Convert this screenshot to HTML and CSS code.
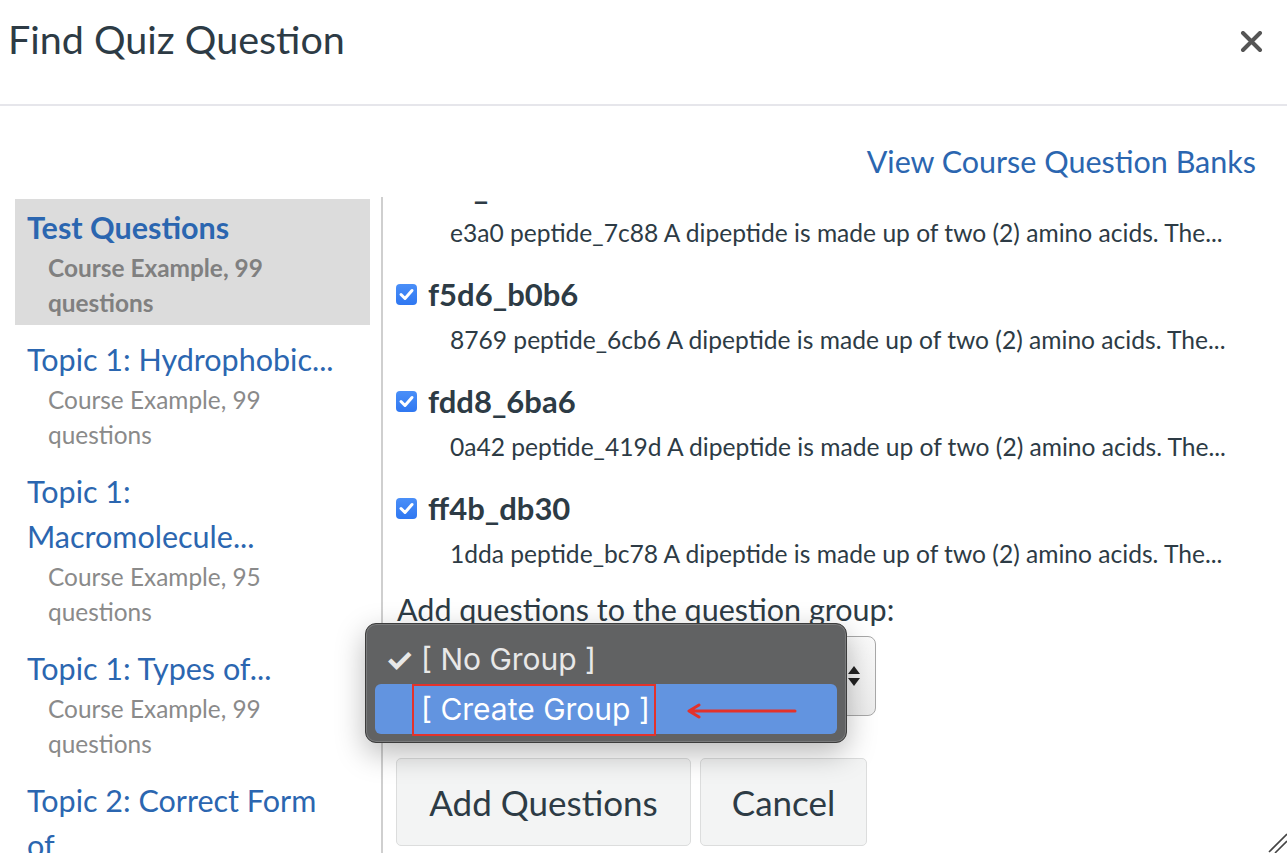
FILE: index.html
```html
<!DOCTYPE html>
<html lang="en">
<head>
<meta charset="utf-8">
<title>Find Quiz Question</title>
<link rel="stylesheet" href="styles.css">
</head>
<body>
<div class="dialog">
  <header class="header">
    <h1 class="title">Find Quiz Question</h1>
    <button class="close" aria-label="Close">
      <svg width="23" height="22" viewBox="0 0 23 22"><path d="M3 2 L20 19 M20 2 L3 19" stroke="#555" stroke-width="4" stroke-linecap="round"/></svg>
    </button>
  </header>
  <div class="body">
    <div class="bank-link-row"><a class="bank-link" href="#">View Course Question Banks</a></div>
    <div class="columns">
      <nav class="sidebar">
        <div class="bank selected">
          <div class="bank-title">Test Questions</div>
          <div class="bank-sub">Course Example, 99 questions</div>
        </div>
        <div class="bank">
          <div class="bank-title">Topic 1: Hydrophobic...</div>
          <div class="bank-sub">Course Example, 99 questions</div>
        </div>
        <div class="bank">
          <div class="bank-title">Topic 1:<br>Macromolecule...</div>
          <div class="bank-sub">Course Example, 95 questions</div>
        </div>
        <div class="bank">
          <div class="bank-title">Topic 1: Types of...</div>
          <div class="bank-sub">Course Example, 99 questions</div>
        </div>
        <div class="bank">
          <div class="bank-title">Topic 2: Correct Form<br>of...</div>
          <div class="bank-sub">Course Example, 99 questions</div>
        </div>
      </nav>
      <section class="pane">
        <div class="q-list">
          <div class="q-list-inner">
            <div class="q">
              <div class="q-title"><span class="cb"><svg width="21" height="21" viewBox="0 0 21 21"><path d="M5 10.5 L9 14.5 L16 6.5" fill="none" stroke="#fff" stroke-width="3" stroke-linecap="round" stroke-linejoin="round"/></svg></span>e3f_2c91</div>
              <div class="q-desc">e3a0 peptide_7c88 A dipeptide is made up of two (2) amino acids. The...</div>
            </div>
            <div class="q">
              <div class="q-title"><span class="cb"><svg width="21" height="21" viewBox="0 0 21 21"><path d="M5 10.5 L9 14.5 L16 6.5" fill="none" stroke="#fff" stroke-width="3" stroke-linecap="round" stroke-linejoin="round"/></svg></span>f5d6_b0b6</div>
              <div class="q-desc">8769 peptide_6cb6 A dipeptide is made up of two (2) amino acids. The...</div>
            </div>
            <div class="q">
              <div class="q-title"><span class="cb"><svg width="21" height="21" viewBox="0 0 21 21"><path d="M5 10.5 L9 14.5 L16 6.5" fill="none" stroke="#fff" stroke-width="3" stroke-linecap="round" stroke-linejoin="round"/></svg></span>fdd8_6ba6</div>
              <div class="q-desc">0a42 peptide_419d A dipeptide is made up of two (2) amino acids. The...</div>
            </div>
            <div class="q">
              <div class="q-title"><span class="cb"><svg width="21" height="21" viewBox="0 0 21 21"><path d="M5 10.5 L9 14.5 L16 6.5" fill="none" stroke="#fff" stroke-width="3" stroke-linecap="round" stroke-linejoin="round"/></svg></span>ff4b_db30</div>
              <div class="q-desc">1dda peptide_bc78 A dipeptide is made up of two (2) amino acids. The...</div>
            </div>
          </div>
        </div>
        <div class="group-form">
          <div class="group-label">Add questions to the question group:</div>
          <div class="select-wrap">
            <div class="select">
              <span class="select-arrows"><svg width="14" height="24" viewBox="0 0 14 24"><path d="M7 2 L13 10 H1 Z M7 22 L13 14 H1 Z" fill="#222"/></svg></span>
            </div>
            <div class="menu">
              <div class="menu-item"><span class="menu-check">✓</span>[ No Group ]</div>
              <div class="menu-item active">
                <span class="menu-check"></span>[ Create Group ]
                <span class="callout"></span>
                <svg class="callout-arrow" width="112" height="16" viewBox="0 0 112 16"><path d="M110 8 H6 M14 2 L4 8 L14 14" fill="none" stroke="#e3322b" stroke-width="3" stroke-linecap="round" stroke-linejoin="round"/></svg>
              </div>
            </div>
          </div>
          <div class="actions">
            <button class="btn btn-add">Add Questions</button>
            <button class="btn btn-cancel">Cancel</button>
          </div>
        </div>
      </section>
    </div>
  </div>
  <svg class="resize" width="20" height="26" viewBox="0 0 20 26"><path d="M2 25 L20 7 M8 26 L20 14" stroke="#444" stroke-width="1.6"/></svg>
</div>
</body>
</html>
```
FILE: styles.css
```css
html, body {
  margin: 0;
  padding: 0;
  height: 100%;
  overflow: hidden;
  background: #fff;
}
body {
  font-family: "Lato", "Open Sans", "Noto Sans", sans-serif;
  color: #2d3b45;
}
.dialog {
  position: relative;
  height: 100vh;
  display: flex;
  flex-direction: column;
}
.header {
  height: 106px;
  box-sizing: border-box;
  border-bottom: 2px solid #e6e6eb;
  display: flex;
  align-items: flex-start;
  justify-content: space-between;
  padding: 15px 24px 0 8px;
  flex: none;
}
.title {
  margin: 0;
  font-weight: 400;
  font-size: 39.5px;
  line-height: 47px;
  color: #2d3b45;
}
.close {
  border: 0;
  background: none;
  padding: 0;
  margin-top: 16px;
  width: 23px;
  height: 22px;
}
.body {
  flex: 1;
  min-height: 0;
  display: flex;
  flex-direction: column;
  padding: 35px 0 0 15px;
}
.bank-link-row {
  display: flex;
  justify-content: flex-end;
  padding-right: 31px;
  flex: none;
}
.bank-link {
  font-size: 30.5px;
  line-height: 40px;
  color: #2b66b0;
  text-decoration: none;
}
.columns {
  flex: 1;
  min-height: 0;
  display: flex;
  margin-top: 16px;
}
.sidebar {
  width: 355px;
  flex: none;
  padding-top: 2px;
  overflow: hidden;
  margin-right: 11px;
}
.bank {
  padding: 6px 12px 5px 12px;
  margin-bottom: 6px;
}
.bank.selected {
  background: #dcdcdc;
}
.bank-title {
  font-size: 30.5px;
  line-height: 45px;
  color: #2b66b0;
}
.selected .bank-title {
  font-weight: 700;
}
.bank-sub {
  margin-left: 21px;
  max-width: 260px;
  font-size: 24.4px;
  line-height: 35px;
  color: #8a8a8a;
}
.selected .bank-sub {
  font-weight: 700;
  color: #808080;
}
.pane {
  flex: 1;
  min-width: 0;
  border-left: 2px solid #cfcfcf;
  padding-left: 13px;
}
.q-list {
  overflow: hidden;
  margin-top: 2px;
}
.q-list-inner {
  margin-top: -34px;
}
.q {
  margin-bottom: 22px;
}
.q-title {
  display: flex;
  align-items: center;
  font-size: 31px;
  line-height: 45px;
  font-weight: 700;
  color: #2d3b45;
}
.cb {
  width: 21px;
  height: 21px;
  border-radius: 4px;
  background: linear-gradient(#4a8ff8, #2f77f1);
  margin-right: 11px;
  display: inline-flex;
  flex: none;
}
.q-desc {
  margin-top: 6px;
  margin-left: 54px;
  font-size: 24.6px;
  line-height: 34px;
  white-space: nowrap;
  color: #2d3b45;
}
.group-label {
  font-size: 30.5px;
  line-height: 34px;
  margin-left: 1px;
  margin-top: -1px;
}
.select-wrap {
  position: relative;
  margin-top: 10px;
  width: 480px;
}
.select {
  height: 80px;
  box-sizing: border-box;
  border: 1px solid #a8a8a8;
  border-radius: 8px;
  background: linear-gradient(#fafafa, #ececec);
  display: flex;
  align-items: center;
  justify-content: flex-end;
  padding-right: 14px;
}
.select-arrows {
  display: inline-flex;
}
.menu {
  position: absolute;
  left: -31px;
  top: -13px;
  width: 482px;
  height: 120px;
  box-sizing: border-box;
  padding: 10px 9px;
  background: #616263;
  border: 1px solid #3c3c3c;
  border-radius: 11px;
  box-shadow: inset 0 0 0 1px #7a7b7c, 0 10px 30px rgba(0, 0, 0, 0.28);
  font-family: "Inter", "Liberation Sans", sans-serif;
  font-size: 30px;
  color: #e8e8e8;
  z-index: 2;
}
.menu-item {
  position: relative;
  height: 50px;
  display: flex;
  align-items: center;
  padding-left: 10px;
  border-radius: 6px;
}
.menu-check {
  width: 36px;
  flex: none;
  font-size: 32px;
  font-weight: 700;
}
.menu-item.active {
  background: #6294e0;
  color: #fff;
}
.callout {
  position: absolute;
  left: 37px;
  top: 0;
  width: 244px;
  height: 52px;
  box-sizing: border-box;
  border: 2px solid #e3322b;
}
.callout-arrow {
  position: absolute;
  left: 310px;
  top: 19px;
}
.actions {
  display: flex;
  gap: 9px;
  margin-top: 42px;
}
.btn {
  font-family: "Lato", sans-serif;
  font-size: 35px;
  color: #2d3b45;
  background: #f3f4f4;
  border: 1px solid #dcdddd;
  border-radius: 5px;
  height: 88px;
  padding: 0;
}
.btn-add {
  width: 295px;
}
.btn-cancel {
  width: 167px;
}
.resize {
  position: absolute;
  right: 0;
  bottom: 0;
}
```
